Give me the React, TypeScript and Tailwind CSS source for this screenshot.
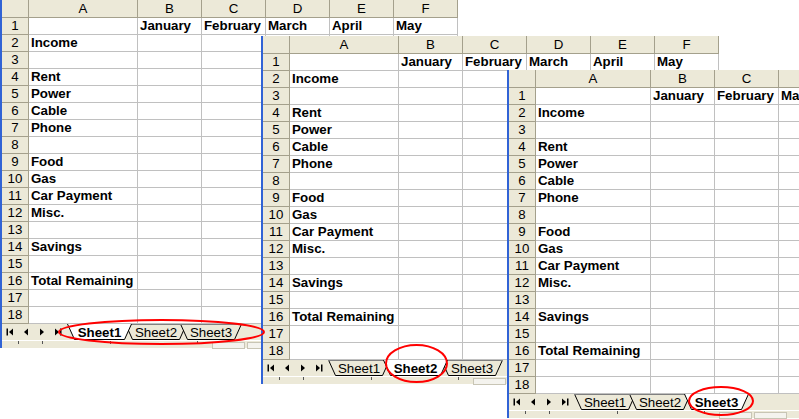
import React from 'react'

const LABELS: Record<number, string> = {
  2: 'Income',
  4: 'Rent',
  5: 'Power',
  6: 'Cable',
  7: 'Phone',
  9: 'Food',
  10: 'Gas',
  11: 'Car Payment',
  12: 'Misc.',
  14: 'Savings',
  16: 'Total Remaining',
}

const LETTERS = ['B', 'C', 'D', 'E', 'F']
const MONTHS = ['January', 'February', 'March', 'April', 'May']
const ROWS = Array.from({ length: 18 }, (_, i) => i + 1)

interface Ellipse {
  cx: number
  cy: number
  rx: number
  ry: number
}

function NavButtons() {
  return (
    <div className="flex h-full w-[65px] items-center">
      <div className="flex w-[16px] justify-center">
        <svg width="8" height="8" viewBox="0 0 8 8">
          <rect x="0.5" y="0.5" width="1.5" height="7" fill="#000" />
          <polygon points="7,0.5 3,4 7,7.5" fill="#000" />
        </svg>
      </div>
      <div className="flex w-[16px] justify-center">
        <svg width="8" height="8" viewBox="0 0 8 8">
          <polygon points="6,0.5 2,4 6,7.5" fill="#000" />
        </svg>
      </div>
      <div className="flex w-[16px] justify-center">
        <svg width="8" height="8" viewBox="0 0 8 8">
          <polygon points="2,0.5 6,4 2,7.5" fill="#000" />
        </svg>
      </div>
      <div className="flex w-[16px] justify-center">
        <svg width="8" height="8" viewBox="0 0 8 8">
          <polygon points="1,0.5 5,4 1,7.5" fill="#000" />
          <rect x="6" y="0.5" width="1.5" height="7" fill="#000" />
        </svg>
      </div>
    </div>
  )
}

function Tab({ label, active, first }: { label: string; active: boolean; first: boolean }) {
  const w = active ? 65 : 62
  return (
    <div
      className={
        'relative flex h-[16px] shrink-0 items-center justify-center ' +
        (active ? 'z-10 w-[65px] font-bold ' : 'w-[62px] ') +
        (first ? '' : '-ml-[7px]')
      }
    >
      <svg className="absolute left-0 top-0" width={w} height="16" viewBox={`0 0 ${w} 16`}>
        <polygon
          points={`0.5,0 ${w - 0.5},0 ${w - 7.5},15.5 7.5,15.5`}
          fill={active ? '#ffffff' : '#ece9d8'}
          stroke="none"
        />
        <polyline
          points={`0.5,0 7.5,15.5 ${w - 7.5},15.5 ${w - 0.5},0`}
          fill="none"
          stroke="#000"
          strokeWidth="1"
        />
        {!active && <line x1="0" y1="0.5" x2={w} y2="0.5" stroke="#808080" strokeWidth="1" />}
      </svg>
      <span className="relative pt-[1px] text-[13.3px] leading-[15px]">{label}</span>
    </div>
  )
}

function SheetWindow({
  className,
  colA,
  active,
  ellipse,
}: {
  className: string
  colA: string
  active: number
  ellipse: Ellipse
}) {
  return (
    <div className={'absolute border-l-2 border-[#3163d5] bg-white ' + className}>
      {/* column headers */}
      <div className="flex h-[18px]">
        <div className="w-[27px] shrink-0 border-r border-b border-[#a4a08c] bg-[#ece9d8]" />
        <div
          className={
            'flex shrink-0 items-center justify-center border-r border-b border-[#a4a08c] bg-[#ece9d8] text-[13.3px] ' +
            colA
          }
        >
          A
        </div>
        {LETTERS.map(l => (
          <div
            key={l}
            className="flex w-[64px] shrink-0 items-center justify-center border-r border-b border-[#a4a08c] bg-[#ece9d8] text-[13.3px]"
          >
            {l}
          </div>
        ))}
      </div>

      {/* rows */}
      {ROWS.map(r => (
        <div key={r} className="flex h-[17px]">
          <div className="w-[27px] shrink-0 border-r border-b border-[#a4a08c] bg-[#ece9d8] text-center text-[13.3px] leading-[16px]">
            {r}
          </div>
          <div
            className={
              'shrink-0 overflow-hidden whitespace-nowrap border-r border-b border-[#c0c0c0] pl-[2px] text-[13.3px] font-bold leading-[16px] ' +
              colA
            }
          >
            {LABELS[r] ?? ''}
          </div>
          {MONTHS.map(m => (
            <div
              key={m}
              className="w-[64px] shrink-0 overflow-hidden whitespace-nowrap border-r border-b border-[#c0c0c0] pl-[2px] text-[13.3px] font-bold leading-[16px]"
            >
              {r === 1 ? m : ''}
            </div>
          ))}
        </div>
      ))}

      {/* sheet tabs */}
      <div className="flex h-[16px] bg-[#ece9d8]">
        <NavButtons />
        <div className="flex">
          {['Sheet1', 'Sheet2', 'Sheet3'].map((s, i) => (
            <Tab key={s} label={s} active={i === active} first={i === 0} />
          ))}
        </div>
      </div>

      {/* status strip */}
      <div className="relative h-[8px] border-t border-white bg-[#ece9d8]">
        <div className="absolute left-[16px] top-0 h-[3px] w-px bg-[#555]" />
        <div className="absolute left-[40px] top-0 h-[3px] w-px bg-[#555]" />
        <div className="absolute left-[108px] top-0 h-[3px] w-px bg-[#555]" />
        <div className="absolute left-[195px] top-0 h-[3px] w-px bg-[#555]" />
        <div className="absolute left-[210px] top-[1px] h-[7px] w-[33px] border border-[#c8c5b5] bg-[#f4f3ee]" />
        <div className="absolute left-[245px] top-[1px] h-[7px] w-[33px] border border-[#c8c5b5] bg-[#f4f3ee]" />
      </div>

      <svg className="pointer-events-none absolute left-0 top-0 z-20 h-full w-full overflow-visible">
        <ellipse
          cx={ellipse.cx}
          cy={ellipse.cy}
          rx={ellipse.rx}
          ry={ellipse.ry}
          fill="none"
          stroke="#ff0000"
          strokeWidth="2"
        />
      </svg>
    </div>
  )
}

export default function App() {
  return (
    <div className="relative h-[419px] w-[799px] overflow-hidden bg-white font-['Liberation_Sans',Arial,sans-serif] text-black">
      <SheetWindow
        className="left-0 top-0 w-[458px]"
        colA="w-[109px]"
        active={0}
        ellipse={{ cx: 159.5, cy: 332, rx: 102.5, ry: 12 }}
      />
      <SheetWindow
        className="left-[261px] top-[36px] w-[458px]"
        colA="w-[109px]"
        active={1}
        ellipse={{ cx: 153.5, cy: 327.5, rx: 30.5, ry: 18.5 }}
      />
      <SheetWindow
        className="left-[507px] top-[70px] w-[470px]"
        colA="w-[115px]"
        active={2}
        ellipse={{ cx: 212, cy: 331, rx: 32, ry: 14 }}
      />
    </div>
  )
}
